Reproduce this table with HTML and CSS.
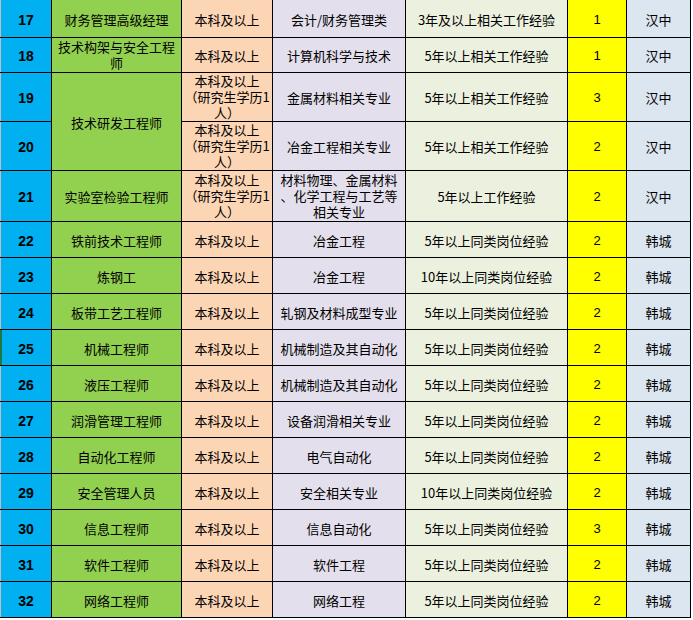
FILE: index.html
```html
<!DOCTYPE html>
<html lang="zh">
<head>
<meta charset="utf-8">
<title>岗位表</title>
<link rel="stylesheet" href="styles.css">
</head>
<body>
<table class="jobs">
  <colgroup>
    <col class="w-no"><col class="w-pos"><col class="w-edu"><col class="w-major"><col class="w-exp"><col class="w-num"><col class="w-loc">
  </colgroup>
  <tbody>
    <tr class="h17"><td class="no">17</td><td class="pos">财务管理高级经理</td><td class="edu">本科及以上</td><td class="major">会计/财务管理类</td><td class="exp">3年及以上相关工作经验</td><td class="num">1</td><td class="loc">汉中</td></tr>
    <tr class="h18"><td class="no">18</td><td class="pos ml">技术构架与安全工程<br>师</td><td class="edu">本科及以上</td><td class="major">计算机科学与技术</td><td class="exp">5年以上相关工作经验</td><td class="num">1</td><td class="loc">汉中</td></tr>
    <tr class="h19"><td class="no">19</td><td class="pos" rowspan="2">技术研发工程师</td><td class="edu ml">本科及以上<br>（研究生学历1<br>人）</td><td class="major">金属材料相关专业</td><td class="exp">5年以上相关工作经验</td><td class="num">3</td><td class="loc">汉中</td></tr>
    <tr class="h20"><td class="no">20</td><td class="edu ml">本科及以上<br>（研究生学历1<br>人）</td><td class="major">冶金工程相关专业</td><td class="exp">5年以上相关工作经验</td><td class="num">2</td><td class="loc">汉中</td></tr>
    <tr class="h21"><td class="no">21</td><td class="pos">实验室检验工程师</td><td class="edu ml">本科及以上<br>（研究生学历1<br>人）</td><td class="major ml">材料物理、金属材料<br>、化学工程与工艺等<br>相关专业</td><td class="exp">5年以上工作经验</td><td class="num">2</td><td class="loc">汉中</td></tr>
    <tr class="hr"><td class="no">22</td><td class="pos">铁前技术工程师</td><td class="edu">本科及以上</td><td class="major">冶金工程</td><td class="exp">5年以上同类岗位经验</td><td class="num">2</td><td class="loc">韩城</td></tr>
    <tr class="hr"><td class="no">23</td><td class="pos">炼钢工</td><td class="edu">本科及以上</td><td class="major">冶金工程</td><td class="exp">10年以上同类岗位经验</td><td class="num">2</td><td class="loc">韩城</td></tr>
    <tr class="hr"><td class="no">24</td><td class="pos">板带工艺工程师</td><td class="edu">本科及以上</td><td class="major">轧钢及材料成型专业</td><td class="exp">5年以上同类岗位经验</td><td class="num">2</td><td class="loc">韩城</td></tr>
    <tr class="hr"><td class="no mark">25</td><td class="pos">机械工程师</td><td class="edu">本科及以上</td><td class="major">机械制造及其自动化</td><td class="exp">5年以上同类岗位经验</td><td class="num">2</td><td class="loc">韩城</td></tr>
    <tr class="hr"><td class="no">26</td><td class="pos">液压工程师</td><td class="edu">本科及以上</td><td class="major">机械制造及其自动化</td><td class="exp">5年以上同类岗位经验</td><td class="num">2</td><td class="loc">韩城</td></tr>
    <tr class="hr"><td class="no">27</td><td class="pos">润滑管理工程师</td><td class="edu">本科及以上</td><td class="major">设备润滑相关专业</td><td class="exp">5年以上同类岗位经验</td><td class="num">2</td><td class="loc">韩城</td></tr>
    <tr class="hr"><td class="no">28</td><td class="pos">自动化工程师</td><td class="edu">本科及以上</td><td class="major">电气自动化</td><td class="exp">5年以上同类岗位经验</td><td class="num">2</td><td class="loc">韩城</td></tr>
    <tr class="hr"><td class="no">29</td><td class="pos">安全管理人员</td><td class="edu">本科及以上</td><td class="major">安全相关专业</td><td class="exp">10年以上同类岗位经验</td><td class="num">2</td><td class="loc">韩城</td></tr>
    <tr class="hr"><td class="no">30</td><td class="pos">信息工程师</td><td class="edu">本科及以上</td><td class="major">信息自动化</td><td class="exp">5年以上同类岗位经验</td><td class="num">3</td><td class="loc">韩城</td></tr>
    <tr class="hr"><td class="no">31</td><td class="pos">软件工程师</td><td class="edu">本科及以上</td><td class="major">软件工程</td><td class="exp">5年以上同类岗位经验</td><td class="num">2</td><td class="loc">韩城</td></tr>
    <tr class="hr"><td class="no">32</td><td class="pos">网络工程师</td><td class="edu">本科及以上</td><td class="major">网络工程</td><td class="exp">5年以上同类岗位经验</td><td class="num">2</td><td class="loc">韩城</td></tr>
  </tbody>
</table>
</body>
</html>
```
FILE: styles.css
```css
html, body {
  margin: 0;
  padding: 0;
  background: #ffffff;
}

.jobs {
  border-collapse: collapse;
  table-layout: fixed;
  width: 690px;
  margin-top: -1px;
  font-family: "Noto Sans CJK SC", "Noto Sans", sans-serif;
  font-size: 13px;
  color: #000000;
}

.w-no { width: 51px; }
.w-pos { width: 130px; }
.w-edu { width: 91px; }
.w-major { width: 133px; }
.w-exp { width: 162px; }
.w-num { width: 59px; }
.w-loc { width: 64px; }

.jobs td {
  border: 1px solid #000000;
  padding: 2px 0 0 0;
  text-align: center;
  vertical-align: middle;
  white-space: nowrap;
  line-height: 16px;
  overflow: hidden;
}

.jobs td.ml {
  padding: 0;
  line-height: 16px;
}

.jobs td.no {
  background: #00b0f0;
  border-left: 1px solid #bfbfbf;
  font-family: "Liberation Sans", "DejaVu Sans", sans-serif;
  font-weight: bold;
  font-size: 14px;
}
.jobs td.no.mark { border-left: 1px solid #1e7a3c; box-shadow: inset 1px 0 0 #1e7a3c; }
.jobs td.pos { background: #92d050; }
.jobs td.edu { background: #fcd5b4; }
.jobs td.major { background: #e4dfec; }
.jobs td.exp { background: #ebf1de; }
.jobs td.num {
  background: #ffff00;
  font-family: "Liberation Sans", "DejaVu Sans", sans-serif;
}
.jobs td.loc { background: #dce6f1; }

.h17 { height: 38px; }
.h18 { height: 35px; }
.h19 { height: 49px; }
.h20 { height: 49px; }
.h21 { height: 51px; }
.hr { height: 36px; }
```
